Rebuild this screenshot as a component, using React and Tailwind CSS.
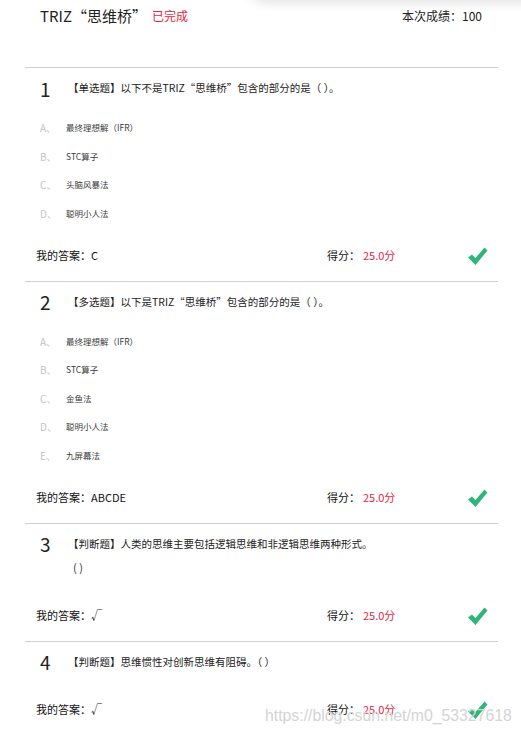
import React from 'react';

const font = { fontFamily: '"Noto Sans CJK SC", "Noto Sans", sans-serif' };

const questions = [
  {
    no: 1,
    title: '【单选题】以下不是TRIZ“思维桥”包含的部分的是（ ）。',
    options: ['最终理想解（IFR）', 'STC算子', '头脑风暴法', '聪明小人法'],
    answer: 'C',
  },
  {
    no: 2,
    title: '【多选题】以下是TRIZ“思维桥”包含的部分的是（ ）。',
    options: ['最终理想解（IFR）', 'STC算子', '金鱼法', '聪明小人法', '九屏幕法'],
    answer: 'ABCDE',
  },
  {
    no: 3,
    title: '【判断题】人类的思维主要包括逻辑思维和非逻辑思维两种形式。',
    extra: '( )',
    answer: '√',
  },
  {
    no: 4,
    title: '【判断题】思维惯性对创新思维有阻碍。（ ）',
    answer: '√',
  },
];

const letters = ['A、', 'B、', 'C、', 'D、', 'E、'];

const Check = () => (
  <svg width="21" height="20" viewBox="0 0 21 20" className="shrink-0">
    <polygon points="1,11.5 5,8.5 8.5,12 17.5,1.5 20.5,4.5 8.5,19" fill="#2fb57a" />
  </svg>
);

const Question = ({ q, last }) => {
  const answerGap = q.options ? 'mt-[17px]' : q.extra ? 'mt-[20px]' : 'mt-[26px]';
  return (
    <div className={`pt-[9px] ${last ? 'pb-[40px]' : 'pb-[14px] border-b border-[#d0d0d0]'}`}>
      {/* Title */}
      <div className="flex items-center h-[22px] pl-[15px]">
        <span className="w-[28px] text-[19px] text-[#222] leading-none">{q.no}</span>
        <span className="text-[10.5px] text-[#222] whitespace-pre">{q.title}</span>
      </div>
      {q.extra && (
        <div className="h-[26px] mt-[4px] flex items-start pl-[48px] text-[11px] text-[#333]">
          {q.extra}
        </div>
      )}

      {/* Options */}
      {q.options && (
        <div className="mt-[14.5px]">
          {q.options.map((o, i) => (
            <div key={i} className="flex items-center h-[28.5px] pl-[15px]">
              <span className="w-[26px] text-[10px] text-[#c4c4c4]">{letters[i]}</span>
              <span className="text-[8.5px] text-[#3a3a3a]">{o}</span>
            </div>
          ))}
        </div>
      )}

      {/* Answer */}
      <div className={`flex items-center h-[22px] pl-[11px] ${answerGap}`}>
        <span className="w-[291px] text-[11px] text-[#111]">我的答案：{q.answer}</span>
        <span className="w-[140px] text-[11px] text-[#111]">
          得分：<span className="ml-[3px] text-[#e8253f]">25.0分</span>
        </span>
        <Check />
      </div>
    </div>
  );
};

export default function App() {
  return (
    <div className="relative w-[521px] h-[744px] overflow-hidden bg-white" style={font}>
      {/* faint shadow from the bar above */}
      <div className="absolute -top-[14px] left-[250px] right-[-20px] h-[14px] bg-white shadow-[0_2px_12px_rgba(0,0,0,0.13)] rounded-bl-[40px]" />

      {/* Header */}
      <div className="h-[67px] pl-[40px] pr-[39px] pt-[2px]">
        <div className="flex items-center h-[28px]">
          <span className="text-[15px] text-[#222]">TRIZ“思维桥”</span>
          <span className="ml-[5px] text-[12px] text-[#e8253f]">已完成</span>
          <span className="ml-auto text-[12px] text-[#222]">本次成绩：100</span>
        </div>
      </div>

      <div className="mx-[25px] w-[473px] border-t border-[#d0d0d0]">
        {questions.map((q, i) => (
          <Question key={q.no} q={q} last={i === questions.length - 1} />
        ))}
      </div>

      {/* watermark */}
      <div
        className="absolute left-[265px] top-[705px] text-[15.8px] text-[#d4d4d4] leading-[22px] whitespace-nowrap"
        style={{ fontFamily: '"Liberation Sans", Arial, sans-serif' }}
      >
        https://blog.csdn.net/m0_53327618
      </div>
    </div>
  );
}
